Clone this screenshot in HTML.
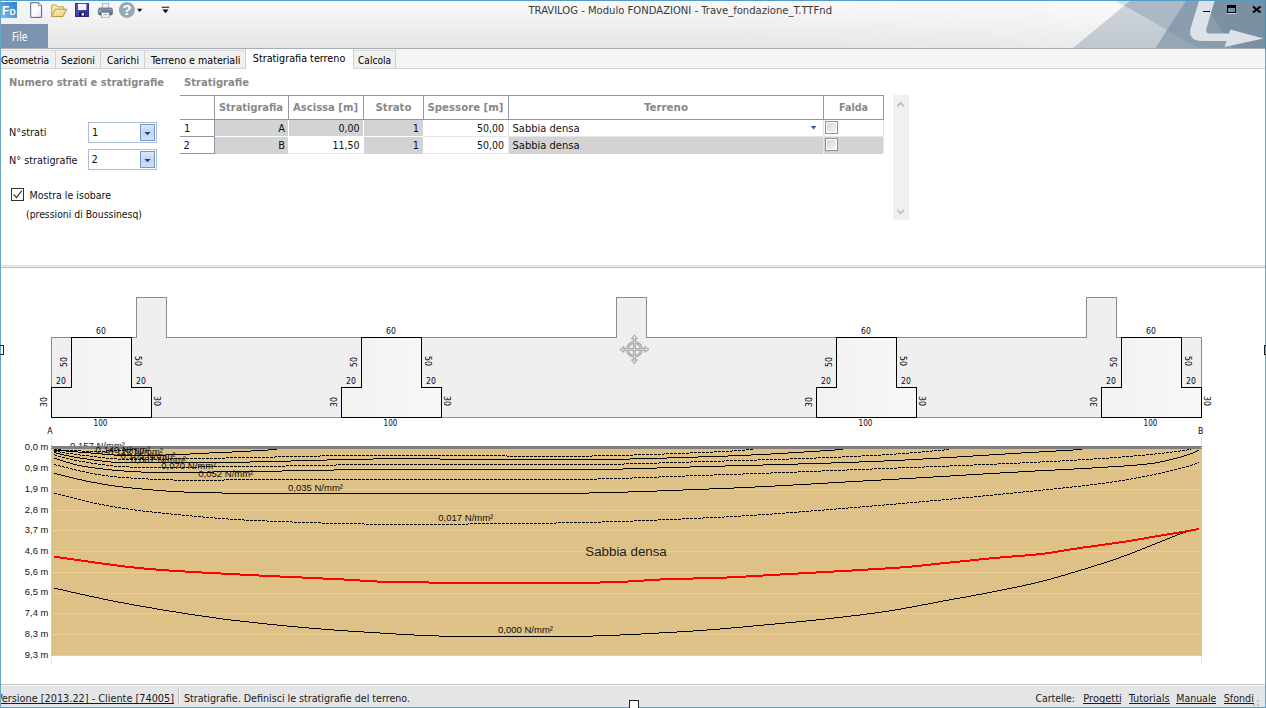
<!DOCTYPE html>
<html lang="it"><head><meta charset="utf-8"><title>TRAVILOG - Modulo FONDAZIONI</title>
<style>html,body{margin:0;padding:0;background:#fff;overflow:hidden}svg{display:block;font-family:'Liberation Sans', sans-serif}</style>
</head><body>
<svg width="1266" height="708" viewBox="0 0 1266 708">
<defs>
<linearGradient id="hdr" x1="0" y1="0" x2="0" y2="1"><stop offset="0" stop-color="#f8f8f8"/><stop offset="0.4" stop-color="#f1f1f1"/><stop offset="1" stop-color="#e4e5e7"/></linearGradient>
<linearGradient id="hdrh" x1="0" y1="0" x2="1" y2="0"><stop offset="0" stop-color="#fff" stop-opacity="0"/><stop offset="0.75" stop-color="#fff" stop-opacity="0.15"/><stop offset="1" stop-color="#fff" stop-opacity="0.3"/></linearGradient>
<linearGradient id="btn" x1="0" y1="0" x2="0" y2="1"><stop offset="0" stop-color="#dce9fb"/><stop offset="0.5" stop-color="#bfd6f5"/><stop offset="1" stop-color="#cfe0f8"/></linearGradient>
<linearGradient id="chk" x1="0" y1="0" x2="1" y2="1"><stop offset="0" stop-color="#d4d4dc"/><stop offset="1" stop-color="#f4f4f6"/></linearGradient>
<linearGradient id="tsec" x1="0" y1="0" x2="1" y2="0"><stop offset="0" stop-color="#f1f1f1"/><stop offset="1" stop-color="#f8f8f8"/></linearGradient>
<linearGradient id="triA" x1="0" y1="0" x2="0" y2="1"><stop offset="0" stop-color="#cfd5db"/><stop offset="1" stop-color="#c0c7cf"/></linearGradient>
</defs>
<g shape-rendering="crispEdges">
<rect x="0" y="0" width="1266" height="708" fill="#ffffff"/>
<rect x="1" y="1" width="1264" height="47" fill="url(#hdr)"/>
<rect x="700" y="1" width="420" height="47" fill="url(#hdrh)"/>
</g>
<g>
<polygon points="1130,1 1073,48 1265,48 1265,1" fill="url(#triA)"/>
<polygon points="1115.3,1 1131,1 1124.2,5.6" fill="#d6dde2"/>
<polygon points="1124.2,5.5 1130,1 1265,1 1265,48 1198.5,48" fill="#acb9c4"/>
<polygon points="1166.9,30 1155.7,48 1199,48 1180,36" fill="#96a6b4"/>
<polygon points="1186,1 1265,1 1265,48 1198.5,48 1166.9,30" fill="#8a9dae"/>
<polygon points="1203,1 1265,1 1265,48 1233,48" fill="#7a90a3"/>
<path d="M1199 1 L1214.5 1 L1206.3 29 Q1205.2 33.5 1210 33.5 L1229 33.5 L1230.4 29.5 L1263.4 38.4 L1224.5 46.9 L1226.6 41 L1203 41 Q1187.5 41 1190.7 28 Z" fill="#dde2e8"/>
</g>
<g shape-rendering="crispEdges">
<rect x="1" y="48" width="1264" height="1" fill="#a9aeb4"/>
<rect x="1" y="24" width="47" height="24" fill="#7b93b0"/>
<rect x="1" y="49" width="1264" height="19" fill="#f4f4f4"/>
<rect x="1" y="68" width="1264" height="1" fill="#d4d4d4"/>
<rect x="1" y="50" width="54" height="18" fill="#f0f0f0"/>
<rect x="56" y="50" width="44" height="18" fill="#f0f0f0"/>
<rect x="101" y="50" width="43" height="18" fill="#f0f0f0"/>
<rect x="145" y="50" width="100" height="18" fill="#f0f0f0"/>
<rect x="354" y="50" width="41" height="18" fill="#f0f0f0"/>
<rect x="55" y="50" width="1" height="18" fill="#d0d0d0"/>
<rect x="100" y="50" width="1" height="18" fill="#d0d0d0"/>
<rect x="144" y="50" width="1" height="18" fill="#d0d0d0"/>
<rect x="245" y="50" width="1" height="18" fill="#d0d0d0"/>
<rect x="353" y="50" width="1" height="18" fill="#d0d0d0"/>
<rect x="395" y="50" width="1" height="18" fill="#d0d0d0"/>
<rect x="1" y="50" width="245" height="1" fill="#d9d9d9"/>
<rect x="354" y="50" width="42" height="1" fill="#d9d9d9"/>
<rect x="246" y="49" width="107" height="20" fill="#ffffff"/>
<rect x="245" y="49" width="1" height="19" fill="#d0d0d0"/>
<rect x="353" y="49" width="1" height="19" fill="#d0d0d0"/>
</g>
<text x="528.5" y="14" font-size="11" fill="#3a3a3a" textLength="303.5" lengthAdjust="spacingAndGlyphs" font-family="DejaVu Sans Condensed, DejaVu Sans, Liberation Sans, sans-serif">TRAVILOG - Modulo FONDAZIONI - Trave_fondazione_T.TTFnd</text>
<text x="12" y="41" font-size="11.5" fill="#ffffff" textLength="15.5" lengthAdjust="spacingAndGlyphs" font-family="DejaVu Sans Condensed, DejaVu Sans, Liberation Sans, sans-serif">File</text>
<text x="1" y="63.5" font-size="11" fill="#000" textLength="48" lengthAdjust="spacingAndGlyphs" font-family="DejaVu Sans Condensed, DejaVu Sans, Liberation Sans, sans-serif">Geometria</text>
<text x="61" y="63.5" font-size="11" fill="#000" textLength="34" lengthAdjust="spacingAndGlyphs" font-family="DejaVu Sans Condensed, DejaVu Sans, Liberation Sans, sans-serif">Sezioni</text>
<text x="107" y="63.5" font-size="11" fill="#000" textLength="32" lengthAdjust="spacingAndGlyphs" font-family="DejaVu Sans Condensed, DejaVu Sans, Liberation Sans, sans-serif">Carichi</text>
<text x="151" y="63.5" font-size="11" fill="#000" textLength="89.5" lengthAdjust="spacingAndGlyphs" font-family="DejaVu Sans Condensed, DejaVu Sans, Liberation Sans, sans-serif">Terreno e materiali</text>
<text x="358" y="63.5" font-size="11" fill="#000" textLength="33" lengthAdjust="spacingAndGlyphs" font-family="DejaVu Sans Condensed, DejaVu Sans, Liberation Sans, sans-serif">Calcola</text>
<text x="252.8" y="62" font-size="11" fill="#000" textLength="92.5" lengthAdjust="spacingAndGlyphs" font-family="DejaVu Sans Condensed, DejaVu Sans, Liberation Sans, sans-serif">Stratigrafia terreno</text>
<defs>
<linearGradient id="appg" x1="0" y1="1" x2="1" y2="0"><stop offset="0" stop-color="#72bdf0"/><stop offset="0.5" stop-color="#4a9ee0"/><stop offset="1" stop-color="#2a82c8"/></linearGradient>
<linearGradient id="docg" x1="0" y1="0" x2="1" y2="1"><stop offset="0" stop-color="#ffffff"/><stop offset="0.6" stop-color="#fbfaff"/><stop offset="1" stop-color="#ddd8f0"/></linearGradient>
<linearGradient id="folg" x1="0" y1="0" x2="1" y2="1"><stop offset="0" stop-color="#fdf3c4"/><stop offset="1" stop-color="#f0c868"/></linearGradient>
<linearGradient id="savg" x1="0" y1="0" x2="1" y2="1"><stop offset="0" stop-color="#5a5ad0"/><stop offset="1" stop-color="#2c2c96"/></linearGradient>
<linearGradient id="prng" x1="0" y1="0" x2="0" y2="1"><stop offset="0" stop-color="#8a9ab4"/><stop offset="1" stop-color="#56677f"/></linearGradient>
</defs>
<g>
<rect x="1" y="2" width="16" height="16" fill="url(#appg)"/>
<text x="1.9" y="14.9" font-size="12" font-weight="bold" fill="#fff">F</text>
<text x="9.5" y="14.8" font-size="8.6" font-weight="bold" fill="#fff">D</text>
<path d="M30.7 2.7 H38.6 L41.6 5.7 V17.4 H30.7 Z" fill="url(#docg)" stroke="#55647c" stroke-width="1"/>
<path d="M38.6 2.7 V5.7 H41.6" fill="#e4e2f0" stroke="#7a869a" stroke-width="0.8"/>
<path d="M51.7 16.6 V5 H56.2 L57.8 6.8 H63.8 V9.3" fill="#f8eaa8" stroke="#b79a4a" stroke-width="0.9"/>
<path d="M51.7 16.6 L55.2 9.2 H66.8 L63 16.6 Z" fill="url(#folg)" stroke="#a88c3c" stroke-width="0.9"/>
<rect x="75.5" y="3.5" width="13" height="13" fill="url(#savg)" stroke="#2c2c8c" stroke-width="1"/>
<rect x="78" y="3.8" width="8.4" height="6.2" fill="#f2f2fa"/>
<rect x="79.2" y="12.2" width="5.6" height="4" fill="#1c1c40"/>
<rect x="81.6" y="13" width="2.4" height="2.6" fill="#e0e0f0"/>
<rect x="102.3" y="3.6" width="6.4" height="6" fill="#f0f0fc" stroke="#9aa2b8" stroke-width="0.7"/>
<rect x="98.4" y="8" width="14" height="7" rx="1.6" fill="url(#prng)" stroke="#50607a" stroke-width="0.7"/>
<rect x="101.4" y="12.6" width="7.8" height="4.6" fill="#fbfbfd" stroke="#8a92a6" stroke-width="0.7"/>
<rect x="103.2" y="14.2" width="4.2" height="1" fill="#9aa0b0"/>
<rect x="99.4" y="10.6" width="1.3" height="1.2" fill="#e8e49a"/>
<circle cx="126.9" cy="9.9" r="8" fill="#93abb5"/>
<text x="126.9" y="15" font-size="14.5" font-weight="bold" fill="#fff" text-anchor="middle">?</text>
<path d="M137 8.8 H142.4 L139.7 12 Z" fill="#111"/>
<path d="M161.7 6.8 H169.2 V7.8 H161.7 Z M162.4 9.5 H168.6 L165.5 13.2 Z" fill="#111"/>
<g shape-rendering="crispEdges">
<rect x="1203" y="11" width="7" height="1" fill="#000"/><rect x="1203" y="12" width="7" height="1" fill="#fff" opacity="0.35"/>
<rect x="1227" y="5" width="9" height="8" fill="#000"/><rect x="1228" y="8" width="7" height="4" fill="#7a8ea0"/><rect x="1227" y="13" width="9" height="1" fill="#fff" opacity="0.6"/>
</g>
<path d="M1253 6.5 L1260.5 12.5 M1260.5 6.5 L1253 12.5" stroke="#000" stroke-width="2.2" fill="none"/>
</g>
<text x="9" y="86" font-size="11" fill="#888888" textLength="155" lengthAdjust="spacingAndGlyphs" font-weight="bold" font-family="DejaVu Sans Condensed, DejaVu Sans, Liberation Sans, sans-serif">Numero strati e stratigrafie</text>
<text x="184" y="86" font-size="11" fill="#888888" textLength="65" lengthAdjust="spacingAndGlyphs" font-weight="bold" font-family="DejaVu Sans Condensed, DejaVu Sans, Liberation Sans, sans-serif">Stratigrafie</text>
<text x="9" y="136" font-size="11" fill="#111" textLength="37.5" lengthAdjust="spacingAndGlyphs" font-family="DejaVu Sans Condensed, DejaVu Sans, Liberation Sans, sans-serif">N°strati</text>
<text x="9" y="164" font-size="11" fill="#111" textLength="68.5" lengthAdjust="spacingAndGlyphs" font-family="DejaVu Sans Condensed, DejaVu Sans, Liberation Sans, sans-serif">N° stratigrafie</text>
<g shape-rendering="crispEdges">
<rect x="88.5" y="122.5" width="68" height="20" fill="#ffffff" stroke="#abbfdd" stroke-width="1"/>
<rect x="140.5" y="124.5" width="14" height="16" fill="url(#btn)" stroke="#7d95c4" stroke-width="1"/>
<rect x="88.5" y="149.5" width="68" height="20" fill="#ffffff" stroke="#abbfdd" stroke-width="1"/>
<rect x="140.5" y="151.5" width="14" height="16" fill="url(#btn)" stroke="#7d95c4" stroke-width="1"/>
</g>
<path d="M144.5 132 h6 l-3 3.2 z" fill="#1c3f7c"/>
<path d="M144.5 159 h6 l-3 3.2 z" fill="#1c3f7c"/>
<text x="92" y="135.5" font-size="11" fill="#111" font-family="DejaVu Sans Condensed, DejaVu Sans, Liberation Sans, sans-serif">1</text>
<text x="91.5" y="163" font-size="11" fill="#111" font-family="DejaVu Sans Condensed, DejaVu Sans, Liberation Sans, sans-serif">2</text>
<g shape-rendering="crispEdges">
<rect x="11.5" y="188.5" width="12" height="12" fill="#ffffff" stroke="#333" stroke-width="1"/>
</g>
<path d="M13.8 194.5 L16.5 197.6 L21.8 190.6" fill="none" stroke="#333" stroke-width="1.2"/>
<text x="29.5" y="198.7" font-size="11" fill="#111" textLength="81.5" lengthAdjust="spacingAndGlyphs" font-family="DejaVu Sans Condensed, DejaVu Sans, Liberation Sans, sans-serif">Mostra le isobare</text>
<text x="26" y="218" font-size="11" fill="#111" textLength="116" lengthAdjust="spacingAndGlyphs" font-family="DejaVu Sans Condensed, DejaVu Sans, Liberation Sans, sans-serif">(pressioni di Boussinesq)</text>
<g shape-rendering="crispEdges">
<rect x="215" y="120" width="73" height="16" fill="#d3d3d3"/>
<rect x="289" y="120" width="74" height="16" fill="#d3d3d3"/>
<rect x="364" y="120" width="59" height="16" fill="#d3d3d3"/>
<rect x="215" y="137" width="73" height="17" fill="#d3d3d3"/>
<rect x="364" y="137" width="59" height="17" fill="#d3d3d3"/>
<rect x="509" y="137" width="314" height="17" fill="#d3d3d3"/>
<rect x="824" y="137" width="59" height="17" fill="#d3d3d3"/>
<rect x="424" y="136" width="459" height="1" fill="#e6e6e6"/>
<rect x="289" y="153" width="74" height="1" fill="#e6e6e6"/>
<rect x="424" y="153" width="84" height="1" fill="#e6e6e6"/>
<rect x="508" y="120" width="1" height="33" fill="#e6e6e6"/>
<rect x="823" y="120" width="1" height="33" fill="#e6e6e6"/>
<rect x="883" y="120" width="1" height="33" fill="#e6e6e6"/>
<rect x="180" y="95" width="704" height="1" fill="#8e97a6"/>
<rect x="180" y="119" width="704" height="1" fill="#8e97a6"/>
<rect x="214" y="95" width="1" height="25" fill="#8e97a6"/>
<rect x="288" y="95" width="1" height="25" fill="#8e97a6"/>
<rect x="363" y="95" width="1" height="25" fill="#8e97a6"/>
<rect x="423" y="95" width="1" height="25" fill="#8e97a6"/>
<rect x="508" y="95" width="1" height="25" fill="#8e97a6"/>
<rect x="823" y="95" width="1" height="25" fill="#8e97a6"/>
<rect x="883" y="95" width="1" height="25" fill="#8e97a6"/>
<rect x="180" y="136" width="35" height="1" fill="#8e97a6"/>
<rect x="180" y="153" width="35" height="1" fill="#8e97a6"/>
<rect x="214" y="119" width="1" height="35" fill="#8e97a6"/>
<rect x="893" y="95" width="16" height="125" fill="#f0f0f0"/>
<rect x="825.5" y="121.5" width="12" height="12" fill="#ffffff" stroke="#8e8f8f" stroke-width="1"/>
<rect x="827" y="123" width="9" height="9" fill="url(#chk)"/>
<rect x="825.5" y="138.5" width="12" height="12" fill="#ffffff" stroke="#8e8f8f" stroke-width="1"/>
<rect x="827" y="140" width="9" height="9" fill="url(#chk)"/>
</g>
<path d="M897.3 106.3 L900.6 102.8 L903.9 106.3" fill="none" stroke="#bdbdbd" stroke-width="1.7"/>
<path d="M897.3 210 L900.6 213.5 L903.9 210" fill="none" stroke="#bdbdbd" stroke-width="1.7"/>
<path d="M810.8 126 h5.6 l-2.8 3.4 z" fill="#2f5fa8"/>
<text x="251" y="111" font-size="11" fill="#888888" text-anchor="middle" textLength="64" lengthAdjust="spacingAndGlyphs" font-weight="bold" font-family="DejaVu Sans Condensed, DejaVu Sans, Liberation Sans, sans-serif">Stratigrafia</text>
<text x="325.5" y="111" font-size="11" fill="#888888" text-anchor="middle" textLength="65" lengthAdjust="spacingAndGlyphs" font-weight="bold" font-family="DejaVu Sans Condensed, DejaVu Sans, Liberation Sans, sans-serif">Ascissa [m]</text>
<text x="393.5" y="111" font-size="11" fill="#888888" text-anchor="middle" textLength="36" lengthAdjust="spacingAndGlyphs" font-weight="bold" font-family="DejaVu Sans Condensed, DejaVu Sans, Liberation Sans, sans-serif">Strato</text>
<text x="465.5" y="111" font-size="11" fill="#888888" text-anchor="middle" textLength="76" lengthAdjust="spacingAndGlyphs" font-weight="bold" font-family="DejaVu Sans Condensed, DejaVu Sans, Liberation Sans, sans-serif">Spessore [m]</text>
<text x="666" y="111" font-size="11" fill="#888888" text-anchor="middle" textLength="44" lengthAdjust="spacingAndGlyphs" font-weight="bold" font-family="DejaVu Sans Condensed, DejaVu Sans, Liberation Sans, sans-serif">Terreno</text>
<text x="853.5" y="111" font-size="11" fill="#888888" text-anchor="middle" textLength="29" lengthAdjust="spacingAndGlyphs" font-weight="bold" font-family="DejaVu Sans Condensed, DejaVu Sans, Liberation Sans, sans-serif">Falda</text>
<text x="184" y="132" font-size="11" fill="#111" font-family="DejaVu Sans Condensed, DejaVu Sans, Liberation Sans, sans-serif">1</text>
<text x="183.5" y="149" font-size="11" fill="#111" font-family="DejaVu Sans Condensed, DejaVu Sans, Liberation Sans, sans-serif">2</text>
<text x="285" y="132" font-size="11" fill="#111" text-anchor="end" font-family="DejaVu Sans Condensed, DejaVu Sans, Liberation Sans, sans-serif">A</text>
<text x="285" y="149" font-size="11" fill="#111" text-anchor="end" font-family="DejaVu Sans Condensed, DejaVu Sans, Liberation Sans, sans-serif">B</text>
<text x="359.5" y="132" font-size="11" fill="#111" text-anchor="end" textLength="21" lengthAdjust="spacingAndGlyphs" font-family="DejaVu Sans Condensed, DejaVu Sans, Liberation Sans, sans-serif">0,00</text>
<text x="359.5" y="149" font-size="11" fill="#111" text-anchor="end" textLength="27" lengthAdjust="spacingAndGlyphs" font-family="DejaVu Sans Condensed, DejaVu Sans, Liberation Sans, sans-serif">11,50</text>
<text x="419" y="132" font-size="11" fill="#111" text-anchor="end" font-family="DejaVu Sans Condensed, DejaVu Sans, Liberation Sans, sans-serif">1</text>
<text x="419" y="149" font-size="11" fill="#111" text-anchor="end" font-family="DejaVu Sans Condensed, DejaVu Sans, Liberation Sans, sans-serif">1</text>
<text x="504" y="132" font-size="11" fill="#111" text-anchor="end" textLength="27" lengthAdjust="spacingAndGlyphs" font-family="DejaVu Sans Condensed, DejaVu Sans, Liberation Sans, sans-serif">50,00</text>
<text x="504" y="149" font-size="11" fill="#111" text-anchor="end" textLength="27" lengthAdjust="spacingAndGlyphs" font-family="DejaVu Sans Condensed, DejaVu Sans, Liberation Sans, sans-serif">50,00</text>
<text x="512.5" y="132" font-size="11" fill="#111" textLength="67" lengthAdjust="spacingAndGlyphs" font-family="DejaVu Sans Condensed, DejaVu Sans, Liberation Sans, sans-serif">Sabbia densa</text>
<text x="512.5" y="149" font-size="11" fill="#111" textLength="67" lengthAdjust="spacingAndGlyphs" font-family="DejaVu Sans Condensed, DejaVu Sans, Liberation Sans, sans-serif">Sabbia densa</text>
<g shape-rendering="crispEdges">
<rect x="1" y="265" width="1264" height="1" fill="#dcdcdc"/>
<rect x="1" y="266" width="1264" height="1" fill="#efefef"/>
<rect x="1" y="267" width="1264" height="1" fill="#c0c0c0"/>
</g>
<g shape-rendering="crispEdges">
<polygon points="51.5,337.5 136.5,337.5 136.5,297.5 166.5,297.5 166.5,337.5 616.5,337.5 616.5,297.5 646.5,297.5 646.5,337.5 1086.5,337.5 1086.5,297.5 1116.5,297.5 1116.5,337.5 1201.5,337.5 1201.5,417.5 51.5,417.5" fill="#efefef" stroke="#8c8c8c" stroke-width="1"/>
<polygon points="71.5,337.5 131.5,337.5 131.5,387.5 151.5,387.5 151.5,417.5 51.5,417.5 51.5,387.5 71.5,387.5" fill="url(#tsec)" stroke="#000" stroke-width="1"/>
<polygon points="361.5,337.5 421.5,337.5 421.5,387.5 441.5,387.5 441.5,417.5 341.5,417.5 341.5,387.5 361.5,387.5" fill="url(#tsec)" stroke="#000" stroke-width="1"/>
<polygon points="836.5,337.5 896.5,337.5 896.5,387.5 916.5,387.5 916.5,417.5 816.5,417.5 816.5,387.5 836.5,387.5" fill="url(#tsec)" stroke="#000" stroke-width="1"/>
<polygon points="1121.5,337.5 1181.5,337.5 1181.5,387.5 1201.5,387.5 1201.5,417.5 1101.5,417.5 1101.5,387.5 1121.5,387.5" fill="url(#tsec)" stroke="#000" stroke-width="1"/>
</g>
<text x="101" y="333.7" font-size="8.7" fill="#05050f" text-anchor="middle" textLength="9.8" lengthAdjust="spacingAndGlyphs" font-family="DejaVu Sans Condensed, DejaVu Sans, Liberation Sans, sans-serif">60</text>
<text x="100.5" y="425.6" font-size="8.7" fill="#05050f" text-anchor="middle" textLength="13.8" lengthAdjust="spacingAndGlyphs" font-family="DejaVu Sans Condensed, DejaVu Sans, Liberation Sans, sans-serif">100</text>
<text x="61" y="384" font-size="8.7" fill="#05050f" text-anchor="middle" textLength="9.8" lengthAdjust="spacingAndGlyphs" font-family="DejaVu Sans Condensed, DejaVu Sans, Liberation Sans, sans-serif">20</text>
<text x="141" y="384" font-size="8.7" fill="#05050f" text-anchor="middle" textLength="9.8" lengthAdjust="spacingAndGlyphs" font-family="DejaVu Sans Condensed, DejaVu Sans, Liberation Sans, sans-serif">20</text>
<text transform="translate(67.2,362) rotate(-90)" font-size="8.7" fill="#05050f" text-anchor="middle" textLength="9.8" lengthAdjust="spacingAndGlyphs" font-family="DejaVu Sans Condensed, DejaVu Sans, Liberation Sans, sans-serif">50</text>
<text transform="translate(134.6,361) rotate(90)" font-size="8.7" fill="#05050f" text-anchor="middle" textLength="9.8" lengthAdjust="spacingAndGlyphs" font-family="DejaVu Sans Condensed, DejaVu Sans, Liberation Sans, sans-serif">50</text>
<text transform="translate(47.2,402) rotate(-90)" font-size="8.7" fill="#05050f" text-anchor="middle" textLength="9.8" lengthAdjust="spacingAndGlyphs" font-family="DejaVu Sans Condensed, DejaVu Sans, Liberation Sans, sans-serif">30</text>
<text transform="translate(154.2,401) rotate(90)" font-size="8.7" fill="#05050f" text-anchor="middle" textLength="9.8" lengthAdjust="spacingAndGlyphs" font-family="DejaVu Sans Condensed, DejaVu Sans, Liberation Sans, sans-serif">30</text>
<text x="391" y="333.7" font-size="8.7" fill="#05050f" text-anchor="middle" textLength="9.8" lengthAdjust="spacingAndGlyphs" font-family="DejaVu Sans Condensed, DejaVu Sans, Liberation Sans, sans-serif">60</text>
<text x="390.5" y="425.6" font-size="8.7" fill="#05050f" text-anchor="middle" textLength="13.8" lengthAdjust="spacingAndGlyphs" font-family="DejaVu Sans Condensed, DejaVu Sans, Liberation Sans, sans-serif">100</text>
<text x="351" y="384" font-size="8.7" fill="#05050f" text-anchor="middle" textLength="9.8" lengthAdjust="spacingAndGlyphs" font-family="DejaVu Sans Condensed, DejaVu Sans, Liberation Sans, sans-serif">20</text>
<text x="431" y="384" font-size="8.7" fill="#05050f" text-anchor="middle" textLength="9.8" lengthAdjust="spacingAndGlyphs" font-family="DejaVu Sans Condensed, DejaVu Sans, Liberation Sans, sans-serif">20</text>
<text transform="translate(357.2,362) rotate(-90)" font-size="8.7" fill="#05050f" text-anchor="middle" textLength="9.8" lengthAdjust="spacingAndGlyphs" font-family="DejaVu Sans Condensed, DejaVu Sans, Liberation Sans, sans-serif">50</text>
<text transform="translate(424.6,361) rotate(90)" font-size="8.7" fill="#05050f" text-anchor="middle" textLength="9.8" lengthAdjust="spacingAndGlyphs" font-family="DejaVu Sans Condensed, DejaVu Sans, Liberation Sans, sans-serif">50</text>
<text transform="translate(337.2,402) rotate(-90)" font-size="8.7" fill="#05050f" text-anchor="middle" textLength="9.8" lengthAdjust="spacingAndGlyphs" font-family="DejaVu Sans Condensed, DejaVu Sans, Liberation Sans, sans-serif">30</text>
<text transform="translate(444.2,401) rotate(90)" font-size="8.7" fill="#05050f" text-anchor="middle" textLength="9.8" lengthAdjust="spacingAndGlyphs" font-family="DejaVu Sans Condensed, DejaVu Sans, Liberation Sans, sans-serif">30</text>
<text x="866" y="333.7" font-size="8.7" fill="#05050f" text-anchor="middle" textLength="9.8" lengthAdjust="spacingAndGlyphs" font-family="DejaVu Sans Condensed, DejaVu Sans, Liberation Sans, sans-serif">60</text>
<text x="865.5" y="425.6" font-size="8.7" fill="#05050f" text-anchor="middle" textLength="13.8" lengthAdjust="spacingAndGlyphs" font-family="DejaVu Sans Condensed, DejaVu Sans, Liberation Sans, sans-serif">100</text>
<text x="826" y="384" font-size="8.7" fill="#05050f" text-anchor="middle" textLength="9.8" lengthAdjust="spacingAndGlyphs" font-family="DejaVu Sans Condensed, DejaVu Sans, Liberation Sans, sans-serif">20</text>
<text x="906" y="384" font-size="8.7" fill="#05050f" text-anchor="middle" textLength="9.8" lengthAdjust="spacingAndGlyphs" font-family="DejaVu Sans Condensed, DejaVu Sans, Liberation Sans, sans-serif">20</text>
<text transform="translate(832.2,362) rotate(-90)" font-size="8.7" fill="#05050f" text-anchor="middle" textLength="9.8" lengthAdjust="spacingAndGlyphs" font-family="DejaVu Sans Condensed, DejaVu Sans, Liberation Sans, sans-serif">50</text>
<text transform="translate(899.6,361) rotate(90)" font-size="8.7" fill="#05050f" text-anchor="middle" textLength="9.8" lengthAdjust="spacingAndGlyphs" font-family="DejaVu Sans Condensed, DejaVu Sans, Liberation Sans, sans-serif">50</text>
<text transform="translate(812.2,402) rotate(-90)" font-size="8.7" fill="#05050f" text-anchor="middle" textLength="9.8" lengthAdjust="spacingAndGlyphs" font-family="DejaVu Sans Condensed, DejaVu Sans, Liberation Sans, sans-serif">30</text>
<text transform="translate(919.2,401) rotate(90)" font-size="8.7" fill="#05050f" text-anchor="middle" textLength="9.8" lengthAdjust="spacingAndGlyphs" font-family="DejaVu Sans Condensed, DejaVu Sans, Liberation Sans, sans-serif">30</text>
<text x="1151" y="333.7" font-size="8.7" fill="#05050f" text-anchor="middle" textLength="9.8" lengthAdjust="spacingAndGlyphs" font-family="DejaVu Sans Condensed, DejaVu Sans, Liberation Sans, sans-serif">60</text>
<text x="1150.5" y="425.6" font-size="8.7" fill="#05050f" text-anchor="middle" textLength="13.8" lengthAdjust="spacingAndGlyphs" font-family="DejaVu Sans Condensed, DejaVu Sans, Liberation Sans, sans-serif">100</text>
<text x="1111" y="384" font-size="8.7" fill="#05050f" text-anchor="middle" textLength="9.8" lengthAdjust="spacingAndGlyphs" font-family="DejaVu Sans Condensed, DejaVu Sans, Liberation Sans, sans-serif">20</text>
<text x="1191" y="384" font-size="8.7" fill="#05050f" text-anchor="middle" textLength="9.8" lengthAdjust="spacingAndGlyphs" font-family="DejaVu Sans Condensed, DejaVu Sans, Liberation Sans, sans-serif">20</text>
<text transform="translate(1117.2,362) rotate(-90)" font-size="8.7" fill="#05050f" text-anchor="middle" textLength="9.8" lengthAdjust="spacingAndGlyphs" font-family="DejaVu Sans Condensed, DejaVu Sans, Liberation Sans, sans-serif">50</text>
<text transform="translate(1184.6,361) rotate(90)" font-size="8.7" fill="#05050f" text-anchor="middle" textLength="9.8" lengthAdjust="spacingAndGlyphs" font-family="DejaVu Sans Condensed, DejaVu Sans, Liberation Sans, sans-serif">50</text>
<text transform="translate(1097.2,402) rotate(-90)" font-size="8.7" fill="#05050f" text-anchor="middle" textLength="9.8" lengthAdjust="spacingAndGlyphs" font-family="DejaVu Sans Condensed, DejaVu Sans, Liberation Sans, sans-serif">30</text>
<text transform="translate(1204.2,401) rotate(90)" font-size="8.7" fill="#05050f" text-anchor="middle" textLength="9.8" lengthAdjust="spacingAndGlyphs" font-family="DejaVu Sans Condensed, DejaVu Sans, Liberation Sans, sans-serif">30</text>
<text x="50" y="433.8" font-size="8.7" fill="#05050f" text-anchor="middle" font-family="DejaVu Sans Condensed, DejaVu Sans, Liberation Sans, sans-serif">A</text>
<text x="1200.8" y="433.8" font-size="8.7" fill="#05050f" text-anchor="middle" font-family="DejaVu Sans Condensed, DejaVu Sans, Liberation Sans, sans-serif">B</text>
<g transform="translate(634.4,349.4)" fill="none" stroke="#a0a0a0">
<path d="M-14.6 0 L-10.4 -3 L-10.4 3 Z M14.6 0 L10.4 -3 L10.4 3 Z M0 -14.6 L-3 -10.4 L3 -10.4 Z M0 14.6 L-3 10.4 L3 10.4 Z" fill="#dcdcdc" stroke-width="0.9"/>
<circle r="7" stroke-width="2.8"/><path d="M-11 0 H11 M0 -11 V11" stroke-width="2.8"/>
<circle r="7" stroke-width="0.8" stroke="#dedede"/><path d="M-12 0 H12 M0 -12 V12" stroke-width="0.8" stroke="#e2e2e2"/>
</g>
<g shape-rendering="crispEdges">
</g>
<text x="70" y="448.6" font-size="9.5" fill="#222" textLength="55" lengthAdjust="spacingAndGlyphs">0,157 N/mm²</text>
<g shape-rendering="crispEdges">
<rect x="51" y="449" width="1151" height="207" fill="#dec187"/>
<rect x="51" y="446" width="1151" height="3" fill="#808080"/>
<line x1="51" y1="468.5" x2="1202" y2="468.5" stroke="#dbdbdb" stroke-width="1" stroke-dasharray="1 1"/>
<line x1="51" y1="489.5" x2="1202" y2="489.5" stroke="#dbdbdb" stroke-width="1" stroke-dasharray="1 1"/>
<line x1="51" y1="510.5" x2="1202" y2="510.5" stroke="#dbdbdb" stroke-width="1" stroke-dasharray="1 1"/>
<line x1="51" y1="530.5" x2="1202" y2="530.5" stroke="#dbdbdb" stroke-width="1" stroke-dasharray="1 1"/>
<line x1="51" y1="551.5" x2="1202" y2="551.5" stroke="#dbdbdb" stroke-width="1" stroke-dasharray="1 1"/>
<line x1="51" y1="572.5" x2="1202" y2="572.5" stroke="#dbdbdb" stroke-width="1" stroke-dasharray="1 1"/>
<line x1="51" y1="593.5" x2="1202" y2="593.5" stroke="#dbdbdb" stroke-width="1" stroke-dasharray="1 1"/>
<line x1="51" y1="613.5" x2="1202" y2="613.5" stroke="#dbdbdb" stroke-width="1" stroke-dasharray="1 1"/>
<line x1="51" y1="634.5" x2="1202" y2="634.5" stroke="#dbdbdb" stroke-width="1" stroke-dasharray="1 1"/>
<line x1="51" y1="655.5" x2="1202" y2="655.5" stroke="#dbdbdb" stroke-width="1" stroke-dasharray="1 1"/>
<line x1="51.5" y1="437" x2="51.5" y2="665" stroke="#cfcfcf" stroke-width="1" stroke-dasharray="1 1"/>
<line x1="1201.5" y1="437" x2="1201.5" y2="665" stroke="#cfcfcf" stroke-width="1" stroke-dasharray="1 1"/>
</g>
<text x="95.5" y="452.5" font-size="9.5" fill="#0e0e0e" textLength="55" lengthAdjust="spacingAndGlyphs">0,140 N/mm²</text>
<text x="108" y="454.8" font-size="9.5" fill="#0e0e0e" textLength="55" lengthAdjust="spacingAndGlyphs">0,122 N/mm²</text>
<text x="120.5" y="458.8" font-size="9.5" fill="#0e0e0e" textLength="55" lengthAdjust="spacingAndGlyphs">0,105 N/mm²</text>
<text x="131" y="463" font-size="9.5" fill="#0e0e0e" textLength="55" lengthAdjust="spacingAndGlyphs">0,087 N/mm²</text>
<text x="161.3" y="468.5" font-size="9.5" fill="#0e0e0e" textLength="55" lengthAdjust="spacingAndGlyphs">0,070 N/mm²</text>
<text x="198.3" y="476.5" font-size="9.5" fill="#0e0e0e" textLength="55" lengthAdjust="spacingAndGlyphs">0,052 N/mm²</text>
<text x="288" y="490.5" font-size="9.5" fill="#0e0e0e" textLength="55" lengthAdjust="spacingAndGlyphs">0,035 N/mm²</text>
<text x="438.3" y="520.5" font-size="9.5" fill="#0e0e0e" textLength="55" lengthAdjust="spacingAndGlyphs">0,017 N/mm²</text>
<text x="498" y="632.8" font-size="9.5" fill="#0e0e0e" textLength="55" lengthAdjust="spacingAndGlyphs">0,000 N/mm²</text>
<text x="585.3" y="555.8" font-size="13.33" fill="#222" textLength="81.5" lengthAdjust="spacingAndGlyphs">Sabbia densa</text>
<g shape-rendering="crispEdges">
<path d="M54 588.5h4M58 589.5h5M63 590.5h4M67 591.5h4M71 592.5h5M76 593.5h4M80 594.5h5M85 595.5h4M89 596.5h5M94 597.5h5M99 598.5h4M103 599.5h5M108 600.5h5M113 601.5h5M118 602.5h6M124 603.5h5M129 604.5h5M134 605.5h6M140 606.5h6M146 607.5h6M152 608.5h5M157 609.5h6M163 610.5h6M169 611.5h7M176 612.5h6M182 613.5h6M188 614.5h7M195 615.5h7M202 616.5h7M209 617.5h7M216 618.5h7M223 619.5h8M231 620.5h9M240 621.5h9M249 622.5h9M258 623.5h9M267 624.5h10M277 625.5h10M287 626.5h11M298 627.5h11M309 628.5h12M321 629.5h13M334 630.5h14M348 631.5h16M364 632.5h16M380 633.5h16M396 634.5h18M414 635.5h25M439 636.5h154M593 635.5h27M620 634.5h21M641 633.5h18M659 632.5h18M677 631.5h16M693 630.5h14M707 629.5h13M720 628.5h11M731 627.5h12M743 626.5h10M753 625.5h11M764 624.5h11M775 623.5h10M785 622.5h11M796 621.5h10M806 620.5h10M816 619.5h9M825 618.5h9M834 617.5h9M843 616.5h8M851 615.5h9M860 614.5h7M867 613.5h8M875 612.5h7M882 611.5h7M889 610.5h6M895 609.5h6M901 608.5h5M906 607.5h6M912 606.5h5M917 605.5h5M922 604.5h6M928 603.5h5M933 602.5h5M938 601.5h5M943 600.5h6M949 599.5h5M954 598.5h6M960 597.5h6M966 596.5h5M971 595.5h5M976 594.5h6M982 593.5h5M987 592.5h5M992 591.5h5M997 590.5h5M1002 589.5h5M1007 588.5h5M1012 587.5h5M1017 586.5h5M1022 585.5h4M1026 584.5h5M1031 583.5h4M1035 582.5h4M1039 581.5h4M1043 580.5h4M1047 579.5h4M1051 578.5h3M1054 577.5h4M1058 576.5h3M1061 575.5h4M1065 574.5h3M1068 573.5h3M1071 572.5h4M1075 571.5h3M1078 570.5h3M1081 569.5h4M1085 568.5h3M1088 567.5h3M1091 566.5h3M1094 565.5h3M1097 564.5h4M1101 563.5h3M1104 562.5h3M1107 561.5h3M1110 560.5h3M1113 559.5h3M1116 558.5h3M1119 557.5h2M1121 556.5h3M1124 555.5h3M1127 554.5h3M1130 553.5h2M1132 552.5h3M1135 551.5h2M1137 550.5h3M1140 549.5h2M1142 548.5h3M1145 547.5h2M1147 546.5h3M1150 545.5h2M1152 544.5h3M1155 543.5h2M1157 542.5h3M1160 541.5h2M1162 540.5h3M1165 539.5h2M1167 538.5h3M1170 537.5h2M1172 536.5h3M1175 535.5h2M1177 534.5h3M1180 533.5h3M1183 532.5h3M1186 531.5h3M1189 530.5h3M1192 529.5h4M1196 528.5h3" fill="none" stroke="#000" stroke-width="1"/>
<path d="M54 493.5h3M58 494.5h3M62 495.5h3M66 496.5h3M70 497.5h3M74 498.5h3M78 499.5h3M82 500.5h3M86 501.5h3M90 502.5h3M94 503.5h3M98 503.5h1M99 504.5h2M102 504.5h2M104 505.5h1M106 505.5h3M110 506.5h3M114 506.5h1M115 507.5h2M118 507.5h3M122 508.5h3M126 508.5h2M128 509.5h1M130 509.5h3M134 509.5h1M135 510.5h2M138 510.5h3M142 510.5h1M143 511.5h2M146 511.5h3M150 511.5h2M152 512.5h1M154 512.5h3M158 512.5h3M162 513.5h3M166 513.5h3M170 513.5h1M171 514.5h2M174 514.5h3M178 514.5h3M182 515.5h3M186 515.5h3M190 515.5h2M192 516.5h1M194 516.5h3M198 516.5h3M202 516.5h1M203 517.5h2M206 517.5h3M210 517.5h3M214 517.5h1M215 518.5h2M218 518.5h3M222 518.5h3M226 518.5h2M228 519.5h1M230 519.5h3M234 519.5h3M238 519.5h3M242 519.5h2M244 520.5h1M246 520.5h3M250 520.5h3M254 520.5h3M258 520.5h3M262 520.5h3M266 520.5h1M267 521.5h2M270 521.5h3M274 521.5h3M278 521.5h3M282 521.5h3M286 521.5h3M290 521.5h2M292 522.5h1M294 522.5h3M298 522.5h3M302 522.5h3M306 522.5h3M310 522.5h3M314 522.5h3M318 522.5h3M322 523.5h3M326 523.5h3M330 523.5h3M334 523.5h3M338 523.5h3M342 523.5h3M346 523.5h3M350 523.5h3M354 523.5h3M358 523.5h3M362 523.5h2M364 524.5h1M366 524.5h3M370 524.5h3M374 524.5h3M378 524.5h3M382 524.5h3M386 524.5h3M390 524.5h3M394 524.5h3M398 524.5h3M402 524.5h3M406 524.5h3M410 524.5h3M414 524.5h3M418 524.5h3M422 524.5h3M426 524.5h3M430 524.5h3M434 524.5h3M438 524.5h3M442 524.5h3M446 524.5h3M450 524.5h3M454 524.5h3M458 524.5h3M462 524.5h3M466 524.5h2M468 523.5h1M470 523.5h3M474 523.5h3M478 523.5h3M482 523.5h3M486 523.5h3M490 523.5h3M494 523.5h3M498 523.5h3M502 523.5h3M506 523.5h3M510 523.5h3M514 523.5h3M518 523.5h3M522 523.5h3M526 523.5h3M530 523.5h3M534 523.5h3M538 523.5h3M542 523.5h3M546 523.5h3M550 523.5h3M554 523.5h2M556 522.5h1M558 522.5h3M562 522.5h3M566 522.5h3M570 522.5h3M574 522.5h3M578 522.5h3M582 522.5h3M586 522.5h3M590 522.5h3M594 522.5h3M598 522.5h3M602 521.5h3M606 521.5h3M610 521.5h3M614 521.5h3M618 521.5h3M622 521.5h3M626 521.5h3M630 521.5h3M634 520.5h3M638 520.5h3M642 520.5h3M646 520.5h3M650 520.5h3M654 520.5h3M658 519.5h3M662 519.5h3M666 519.5h3M670 519.5h3M674 519.5h3M678 519.5h3M682 518.5h3M686 518.5h3M690 518.5h3M694 518.5h3M698 518.5h3M702 518.5h1M703 517.5h2M706 517.5h3M710 517.5h3M714 517.5h3M718 517.5h3M722 517.5h2M724 516.5h1M726 516.5h3M730 516.5h3M734 516.5h3M738 516.5h3M742 515.5h3M746 515.5h3M750 515.5h3M754 515.5h3M758 514.5h3M762 514.5h3M766 514.5h3M770 514.5h2M772 513.5h1M774 513.5h3M778 513.5h3M782 513.5h3M786 512.5h3M790 512.5h3M794 512.5h3M798 512.5h1M799 511.5h2M802 511.5h3M806 511.5h3M810 511.5h1M811 510.5h2M814 510.5h3M818 510.5h3M822 510.5h2M824 509.5h1M826 509.5h3M830 509.5h3M834 509.5h2M836 508.5h1M838 508.5h3M842 508.5h3M846 508.5h2M848 507.5h1M850 507.5h3M854 507.5h3M858 507.5h2M860 506.5h1M862 506.5h3M866 506.5h3M870 506.5h2M872 505.5h1M874 505.5h3M878 505.5h3M882 505.5h2M884 504.5h1M886 504.5h3M890 504.5h3M894 504.5h2M896 503.5h1M898 503.5h3M902 503.5h3M906 503.5h1M907 502.5h2M910 502.5h3M914 502.5h3M918 502.5h1M919 501.5h2M922 501.5h3M926 501.5h3M930 500.5h3M934 500.5h3M938 500.5h3M942 499.5h3M946 499.5h3M950 499.5h2M952 498.5h1M954 498.5h3M958 498.5h3M962 497.5h3M966 497.5h3M970 497.5h3M974 496.5h3M978 496.5h3M982 496.5h1M983 495.5h2M986 495.5h3M990 495.5h3M994 494.5h3M998 494.5h3M1002 494.5h1M1003 493.5h2M1006 493.5h3M1010 493.5h3M1014 492.5h3M1018 492.5h3M1022 492.5h1M1023 491.5h2M1026 491.5h3M1030 491.5h3M1034 490.5h3M1038 490.5h3M1042 490.5h1M1043 489.5h2M1046 489.5h3M1050 489.5h3M1054 488.5h3M1058 488.5h3M1062 488.5h1M1063 487.5h2M1066 487.5h3M1070 487.5h2M1072 486.5h1M1074 486.5h3M1078 486.5h3M1082 485.5h3M1086 485.5h3M1090 484.5h3M1094 484.5h3M1098 483.5h3M1102 483.5h3M1106 482.5h3M1110 482.5h2M1112 481.5h1M1114 481.5h3M1118 481.5h1M1119 480.5h2M1122 480.5h3M1126 479.5h3M1130 479.5h1M1131 478.5h2M1134 478.5h2M1136 477.5h1M1138 477.5h3M1142 476.5h3M1146 476.5h1M1147 475.5h2M1150 475.5h2M1152 474.5h1M1154 474.5h2M1156 473.5h1M1158 473.5h3M1162 472.5h3M1166 471.5h3M1170 470.5h3M1174 469.5h3M1178 468.5h3M1182 467.5h3M1186 466.5h3M1190 465.5h2M1192 464.5h1M1194 464.5h1M1195 463.5h2M1198 462.5h1" fill="none" stroke="#000" stroke-width="1"/>
<path d="M54 473.5h3M57 474.5h4M61 475.5h4M65 476.5h4M69 477.5h4M73 478.5h4M77 479.5h5M82 480.5h4M86 481.5h5M91 482.5h6M97 483.5h5M102 484.5h6M108 485.5h7M115 486.5h8M123 487.5h9M132 488.5h10M142 489.5h11M153 490.5h13M166 491.5h18M184 492.5h38M222 493.5h367M589 492.5h39M628 491.5h29M657 490.5h26M683 489.5h26M709 488.5h25M734 487.5h21M755 486.5h20M775 485.5h18M793 484.5h18M811 483.5h17M828 482.5h17M845 481.5h18M863 480.5h18M881 479.5h18M899 478.5h17M916 477.5h17M933 476.5h17M950 475.5h16M966 474.5h17M983 473.5h17M1000 472.5h18M1018 471.5h17M1035 470.5h20M1055 469.5h19M1074 468.5h18M1092 467.5h16M1108 466.5h16M1124 465.5h13M1137 464.5h10M1147 463.5h8M1155 462.5h5M1160 461.5h5M1165 460.5h4M1169 459.5h4M1173 458.5h4M1177 457.5h4M1181 456.5h3M1184 455.5h3M1187 454.5h3M1190 453.5h3M1193 452.5h2M1195 451.5h2M1197 450.5h2" fill="none" stroke="#000" stroke-width="1"/>
<path d="M54 464.5h2M56 465.5h1M58 465.5h2M60 466.5h1M62 466.5h2M64 467.5h1M66 467.5h2M68 468.5h1M70 468.5h2M72 469.5h1M74 469.5h2M76 470.5h1M78 470.5h2M80 471.5h1M82 471.5h3M86 472.5h3M90 473.5h3M94 473.5h1M95 474.5h2M98 474.5h3M102 475.5h3M106 475.5h2M108 476.5h1M110 476.5h3M114 476.5h3M118 477.5h3M122 477.5h3M126 477.5h3M130 477.5h1M131 478.5h2M134 478.5h3M138 478.5h3M142 478.5h3M146 478.5h2M148 479.5h1M150 479.5h3M154 479.5h3M158 479.5h3M162 479.5h3M166 479.5h3M170 479.5h3M174 480.5h3M178 480.5h3M182 480.5h3M186 480.5h3M190 480.5h3M194 480.5h3M198 480.5h3M202 480.5h3M206 480.5h3M210 480.5h3M214 480.5h3M218 480.5h3M222 480.5h2M224 479.5h1M226 479.5h3M230 479.5h3M234 479.5h3M238 479.5h3M242 479.5h3M246 479.5h3M250 479.5h3M254 479.5h3M258 479.5h3M262 479.5h3M266 479.5h3M270 479.5h3M274 479.5h3M278 479.5h3M282 479.5h3M286 479.5h3M290 479.5h3M294 479.5h3M298 479.5h3M302 479.5h3M306 479.5h3M310 479.5h3M314 479.5h3M318 479.5h3M322 479.5h3M326 479.5h3M330 479.5h3M334 479.5h3M338 479.5h3M342 479.5h3M346 479.5h3M350 479.5h3M354 479.5h3M358 479.5h3M362 479.5h3M366 479.5h3M370 479.5h3M374 479.5h3M378 479.5h3M382 479.5h3M386 479.5h3M390 479.5h3M394 479.5h3M398 479.5h3M402 479.5h3M406 479.5h3M410 479.5h3M414 479.5h3M418 479.5h3M422 479.5h3M426 479.5h3M430 479.5h3M434 479.5h3M438 479.5h3M442 479.5h3M446 479.5h3M450 479.5h3M454 479.5h3M458 479.5h3M462 479.5h3M466 479.5h3M470 479.5h3M474 479.5h3M478 479.5h3M482 479.5h3M486 479.5h3M490 479.5h3M494 479.5h3M498 479.5h3M502 479.5h3M506 479.5h3M510 479.5h3M514 479.5h3M518 479.5h3M522 479.5h3M526 479.5h3M530 479.5h3M534 479.5h3M538 479.5h3M542 479.5h3M546 479.5h3M550 479.5h3M554 479.5h3M558 479.5h3M562 479.5h3M566 479.5h3M570 479.5h3M574 479.5h3M578 479.5h3M582 479.5h3M586 479.5h3M590 479.5h3M594 479.5h3M598 478.5h3M602 478.5h3M606 478.5h3M610 478.5h3M614 478.5h3M618 478.5h3M622 478.5h3M626 478.5h3M630 478.5h2M632 477.5h1M634 477.5h3M638 477.5h3M642 477.5h3M646 477.5h3M650 477.5h3M654 477.5h3M658 477.5h1M659 476.5h2M662 476.5h3M666 476.5h3M670 476.5h3M674 476.5h3M678 476.5h3M682 476.5h3M686 475.5h3M690 475.5h3M694 475.5h3M698 475.5h3M702 475.5h3M706 475.5h3M710 475.5h3M714 474.5h3M718 474.5h3M722 474.5h3M726 474.5h3M730 474.5h3M734 474.5h3M738 474.5h3M742 474.5h1M743 473.5h2M746 473.5h3M750 473.5h3M754 473.5h3M758 473.5h3M762 473.5h3M766 473.5h3M770 473.5h1M771 472.5h2M774 472.5h3M778 472.5h3M782 472.5h3M786 472.5h3M790 472.5h3M794 472.5h3M798 471.5h3M802 471.5h3M806 471.5h3M810 471.5h3M814 471.5h3M818 471.5h3M822 470.5h3M826 470.5h3M830 470.5h3M834 470.5h3M838 470.5h3M842 470.5h3M846 470.5h1M847 469.5h2M850 469.5h3M854 469.5h3M858 469.5h3M862 469.5h3M866 469.5h3M870 469.5h2M872 468.5h1M874 468.5h3M878 468.5h3M882 468.5h3M886 468.5h3M890 468.5h3M894 468.5h3M898 467.5h3M902 467.5h3M906 467.5h3M910 467.5h3M914 467.5h3M918 467.5h3M922 467.5h2M924 466.5h1M926 466.5h3M930 466.5h3M934 466.5h3M938 466.5h3M942 466.5h3M946 466.5h3M950 465.5h3M954 465.5h3M958 465.5h3M962 465.5h3M966 465.5h3M970 465.5h3M974 464.5h3M978 464.5h3M982 464.5h3M986 464.5h3M990 464.5h3M994 464.5h3M998 463.5h3M1002 463.5h3M1006 463.5h3M1010 463.5h3M1014 463.5h3M1018 463.5h2M1020 462.5h1M1022 462.5h3M1026 462.5h3M1030 462.5h3M1034 462.5h3M1038 462.5h2M1040 461.5h1M1042 461.5h3M1046 461.5h3M1050 461.5h3M1054 461.5h3M1058 461.5h2M1060 460.5h1M1062 460.5h3M1066 460.5h3M1070 460.5h3M1074 460.5h3M1078 459.5h3M1082 459.5h3M1086 459.5h3M1090 459.5h3M1094 458.5h3M1098 458.5h3M1102 458.5h3M1106 458.5h3M1110 457.5h3M1114 457.5h3M1118 457.5h3M1122 456.5h3M1126 456.5h3M1130 456.5h3M1134 455.5h3M1138 455.5h3M1142 455.5h3M1146 454.5h3M1150 454.5h3M1154 454.5h1M1155 453.5h2M1158 453.5h3M1162 453.5h2M1164 452.5h1M1166 452.5h3M1170 452.5h2M1172 451.5h1M1174 451.5h3M1178 451.5h2M1180 450.5h1M1182 450.5h3M1186 450.5h1M1187 449.5h2M1190 449.5h1" fill="none" stroke="#000" stroke-width="1"/>
<path d="M54 458.5h3M57 459.5h3M60 460.5h3M63 461.5h3M66 462.5h4M70 463.5h3M73 464.5h4M77 465.5h5M82 466.5h6M88 467.5h7M95 468.5h8M103 469.5h9M112 470.5h12M124 471.5h17M141 472.5h73M214 471.5h68M282 470.5h52M334 469.5h289M623 468.5h34M657 467.5h33M690 466.5h35M725 465.5h38M763 464.5h35M798 463.5h33M831 462.5h28M859 461.5h25M884 460.5h21M905 459.5h18M923 458.5h17M940 457.5h17M957 456.5h16M973 455.5h16M989 454.5h16M1005 453.5h16M1021 452.5h18M1039 451.5h17M1056 450.5h17M1073 449.5h9" fill="none" stroke="#000" stroke-width="1"/>
<path d="M54 454.5h1M55 455.5h2M58 456.5h3M62 457.5h3M66 458.5h3M70 459.5h3M74 460.5h3M78 460.5h1M79 461.5h2M82 461.5h3M86 462.5h3M90 462.5h1M91 463.5h2M94 463.5h3M98 464.5h3M102 464.5h3M106 465.5h3M110 465.5h3M114 466.5h3M118 466.5h3M122 466.5h3M126 466.5h3M130 467.5h3M134 467.5h3M138 467.5h3M142 467.5h3M146 467.5h3M150 467.5h3M154 467.5h3M158 467.5h3M162 467.5h3M166 467.5h3M170 467.5h3M174 467.5h3M178 467.5h3M182 467.5h3M186 467.5h3M190 467.5h3M194 467.5h3M198 467.5h1M199 466.5h2M202 466.5h3M206 466.5h3M210 466.5h3M214 466.5h3M218 466.5h3M222 466.5h3M226 466.5h3M230 466.5h3M234 466.5h3M238 466.5h3M242 466.5h3M246 466.5h3M250 466.5h3M254 466.5h3M258 466.5h3M262 466.5h3M266 466.5h3M270 466.5h3M274 466.5h3M278 466.5h3M282 466.5h3M286 465.5h3M290 465.5h3M294 465.5h3M298 465.5h3M302 465.5h3M306 465.5h3M310 465.5h3M314 465.5h3M318 465.5h3M322 465.5h3M326 465.5h3M330 465.5h3M334 465.5h2M336 464.5h1M338 464.5h3M342 464.5h3M346 464.5h3M350 464.5h3M354 464.5h3M358 464.5h3M362 464.5h3M366 464.5h3M370 464.5h3M374 464.5h3M378 464.5h3M382 464.5h3M386 464.5h3M390 464.5h3M394 464.5h3M398 464.5h3M402 464.5h3M406 464.5h3M410 464.5h3M414 464.5h3M418 464.5h3M422 464.5h3M426 464.5h3M430 464.5h3M434 464.5h3M438 464.5h3M442 464.5h3M446 464.5h3M450 464.5h3M454 464.5h3M458 464.5h3M462 464.5h3M466 464.5h3M470 464.5h3M474 464.5h3M478 464.5h3M482 464.5h3M486 464.5h3M490 464.5h3M494 464.5h3M498 464.5h3M502 464.5h3M506 464.5h3M510 464.5h3M514 464.5h3M518 464.5h3M522 464.5h3M526 464.5h3M530 464.5h3M534 464.5h3M538 464.5h3M542 464.5h3M546 464.5h3M550 464.5h3M554 464.5h3M558 464.5h3M562 464.5h3M566 464.5h3M570 464.5h3M574 464.5h3M578 464.5h3M582 464.5h3M586 464.5h3M590 464.5h3M594 464.5h3M598 464.5h3M602 464.5h3M606 464.5h3M610 464.5h3M614 464.5h3M618 464.5h3M622 464.5h2M624 463.5h1M626 463.5h3M630 463.5h3M634 463.5h3M638 463.5h3M642 463.5h3M646 463.5h3M650 463.5h3M654 463.5h3M658 463.5h1M659 462.5h2M662 462.5h3M666 462.5h3M670 462.5h3M674 462.5h3M678 462.5h3M682 462.5h3M686 462.5h3M690 462.5h1M691 461.5h2M694 461.5h3M698 461.5h3M702 461.5h3M706 461.5h3M710 461.5h3M714 461.5h3M718 461.5h3M722 461.5h2M724 460.5h1M726 460.5h3M730 460.5h3M734 460.5h3M738 460.5h3M742 460.5h3M746 460.5h3M750 460.5h3M754 460.5h3M758 459.5h3M762 459.5h3M766 459.5h3M770 459.5h3M774 459.5h3M778 459.5h3M782 459.5h3M786 459.5h3M790 458.5h3M794 458.5h3M798 458.5h3M802 458.5h3M806 458.5h3M810 458.5h3M814 458.5h2M816 457.5h1M818 457.5h3M822 457.5h3M826 457.5h3M830 457.5h3M834 457.5h3M838 457.5h3M842 456.5h3M846 456.5h3M850 456.5h3M854 456.5h3M858 456.5h3M862 455.5h3M866 455.5h3M870 455.5h3M874 455.5h3M878 455.5h3M882 454.5h3M886 454.5h3M890 454.5h3M894 454.5h2M896 453.5h1M898 453.5h3M902 453.5h3M906 453.5h3M910 452.5h3M914 452.5h3M918 452.5h3M922 451.5h3M926 451.5h3M930 451.5h2M932 450.5h1M934 450.5h3M938 450.5h3M942 450.5h2M944 449.5h1M946 449.5h3" fill="none" stroke="#000" stroke-width="1"/>
<path d="M54 452.5h2M56 453.5h4M60 454.5h4M64 455.5h5M69 456.5h5M74 457.5h6M80 458.5h7M87 459.5h7M94 460.5h8M102 461.5h9M111 462.5h139M250 461.5h41M291 460.5h36M327 459.5h46M373 458.5h67M440 459.5h190M630 458.5h37M667 457.5h31M698 456.5h30M728 455.5h23M751 454.5h20M771 453.5h17M788 452.5h16M804 451.5h16M820 450.5h15M835 449.5h8" fill="none" stroke="#000" stroke-width="1"/>
<path d="M54 451.5h3M58 451.5h2M60 452.5h1M62 452.5h3M66 453.5h3M70 453.5h3M74 454.5h3M78 454.5h2M80 455.5h1M82 455.5h3M86 455.5h3M90 456.5h3M94 456.5h3M98 457.5h3M102 457.5h3M106 458.5h3M110 458.5h3M114 458.5h3M118 459.5h3M122 459.5h3M126 459.5h3M130 459.5h3M134 459.5h3M138 459.5h3M142 459.5h3M146 459.5h3M150 459.5h3M154 459.5h3M158 459.5h3M162 459.5h3M166 459.5h3M170 459.5h1M171 458.5h2M174 458.5h3M178 458.5h3M182 458.5h3M186 458.5h3M190 458.5h3M194 458.5h3M198 458.5h3M202 458.5h3M206 458.5h3M210 458.5h3M214 458.5h3M218 458.5h3M222 458.5h3M226 457.5h3M230 457.5h3M234 457.5h3M238 457.5h3M242 457.5h3M246 457.5h3M250 457.5h3M254 457.5h3M258 457.5h3M262 457.5h3M266 457.5h3M270 457.5h3M274 457.5h1M275 456.5h2M278 456.5h3M282 456.5h3M286 456.5h3M290 456.5h3M294 456.5h3M298 456.5h3M302 456.5h3M306 456.5h3M310 456.5h3M314 456.5h3M318 456.5h2M320 455.5h1M322 455.5h3M326 455.5h3M330 455.5h3M334 455.5h3M338 455.5h3M342 455.5h3M346 455.5h3M350 455.5h3M354 455.5h3M358 455.5h3M362 455.5h3M366 455.5h3M370 455.5h3M374 455.5h3M378 455.5h3M382 455.5h3M386 455.5h3M390 455.5h3M394 455.5h3M398 455.5h3M402 455.5h3M406 455.5h3M410 455.5h3M414 455.5h3M418 455.5h3M422 455.5h3M426 455.5h3M430 455.5h3M434 455.5h3M438 455.5h3M442 455.5h3M446 455.5h3M450 455.5h3M454 455.5h3M458 455.5h3M462 455.5h3M466 455.5h3M470 455.5h3M474 455.5h3M478 455.5h3M482 455.5h3M486 455.5h3M490 455.5h3M494 455.5h3M498 455.5h3M502 455.5h3M506 455.5h1M507 456.5h2M510 456.5h3M514 456.5h3M518 456.5h3M522 456.5h3M526 456.5h3M530 456.5h3M534 456.5h3M538 456.5h3M542 456.5h3M546 456.5h3M550 456.5h3M554 456.5h3M558 456.5h3M562 456.5h3M566 456.5h3M570 456.5h3M574 456.5h3M578 456.5h3M582 456.5h3M586 456.5h3M590 456.5h2M592 455.5h1M594 455.5h3M598 455.5h3M602 455.5h3M606 455.5h3M610 455.5h3M614 455.5h3M618 455.5h3M622 455.5h3M626 455.5h3M630 455.5h3M634 454.5h3M638 454.5h3M642 454.5h3M646 454.5h3M650 454.5h3M654 454.5h3M658 454.5h3M662 454.5h2M664 453.5h1M666 453.5h3M670 453.5h3M674 453.5h3M678 453.5h3M682 453.5h3M686 453.5h3M690 452.5h3M694 452.5h3M698 452.5h3M702 452.5h3M706 452.5h3M710 452.5h3M714 451.5h3M718 451.5h3M722 451.5h3M726 451.5h3M730 451.5h2M732 450.5h1M734 450.5h3M738 450.5h3M742 450.5h3M746 449.5h3M750 449.5h3" fill="none" stroke="#000" stroke-width="1"/>
<path d="M54 450.5h12M66 451.5h12M78 452.5h13M91 453.5h11M102 454.5h12M114 455.5h52M166 454.5h24M190 453.5h19M209 452.5h23M232 451.5h19M251 450.5h17M268 449.5h9" fill="none" stroke="#000" stroke-width="1"/>
<path d="M54 449.5h3M58 449.5h3M62 450.5h3M66 450.5h3M70 450.5h3M74 450.5h3M78 450.5h3M82 451.5h3M86 451.5h3M90 451.5h3M94 451.5h3M98 451.5h3M102 451.5h3M106 451.5h1M107 450.5h2M110 450.5h3M114 450.5h3M118 450.5h3M122 450.5h3M126 449.5h3M130 449.5h3M134 449.5h2" fill="none" stroke="#000" stroke-width="1"/>
<path d="M54 556.5h6M60 557.5h7M67 558.5h7M74 559.5h7M81 560.5h7M88 561.5h7M95 562.5h7M102 563.5h8M110 564.5h7M117 565.5h8M125 566.5h9M134 567.5h10M144 568.5h12M156 569.5h13M169 570.5h16M185 571.5h17M202 572.5h19M221 573.5h19M240 574.5h19M259 575.5h21M280 576.5h22M302 577.5h21M323 578.5h21M344 579.5h16M360 580.5h17M377 581.5h52M429 582.5h171M600 581.5h28M628 580.5h16M644 579.5h16M660 578.5h33M693 577.5h34M727 576.5h19M746 575.5h17M763 574.5h17M780 573.5h18M798 572.5h18M816 571.5h18M834 570.5h18M852 569.5h16M868 568.5h17M885 567.5h15M900 566.5h12M912 565.5h10M922 564.5h9M931 563.5h9M940 562.5h10M950 561.5h10M960 560.5h10M970 559.5h9M979 558.5h10M989 557.5h11M1000 556.5h12M1012 555.5h13M1025 554.5h11M1036 553.5h9M1045 552.5h7M1052 551.5h6M1058 550.5h6M1064 549.5h6M1070 548.5h7M1077 547.5h6M1083 546.5h8M1091 545.5h7M1098 544.5h7M1105 543.5h7M1112 542.5h7M1119 541.5h7M1126 540.5h6M1132 539.5h6M1138 538.5h6M1144 537.5h5M1149 536.5h6M1155 535.5h6M1161 534.5h6M1167 533.5h6M1173 532.5h6M1179 531.5h6M1185 530.5h6M1191 529.5h5M1196 528.5h3M54 557.5h6M60 558.5h7M67 559.5h7M74 560.5h7M81 561.5h7M88 562.5h7M95 563.5h7M102 564.5h8M110 565.5h7M117 566.5h8M125 567.5h9M134 568.5h10M144 569.5h12M156 570.5h13M169 571.5h16M185 572.5h17M202 573.5h19M221 574.5h19M240 575.5h19M259 576.5h21M280 577.5h22M302 578.5h21M323 579.5h21M344 580.5h16M360 581.5h17M377 582.5h52M429 583.5h171M600 582.5h28M628 581.5h16M644 580.5h16M660 579.5h33M693 578.5h34M727 577.5h19M746 576.5h17M763 575.5h17M780 574.5h18M798 573.5h18M816 572.5h18M834 571.5h18M852 570.5h16M868 569.5h17M885 568.5h15M900 567.5h12M912 566.5h10M922 565.5h9M931 564.5h9M940 563.5h10M950 562.5h10M960 561.5h10M970 560.5h9M979 559.5h10M989 558.5h11M1000 557.5h12M1012 556.5h13M1025 555.5h11M1036 554.5h9M1045 553.5h7M1052 552.5h6M1058 551.5h6M1064 550.5h6M1070 549.5h7M1077 548.5h6M1083 547.5h8M1091 546.5h7M1098 545.5h7M1105 544.5h7M1112 543.5h7M1119 542.5h7M1126 541.5h6M1132 540.5h6M1138 539.5h6M1144 538.5h5M1149 537.5h6M1155 536.5h6M1161 535.5h6M1167 534.5h6M1173 533.5h6M1179 532.5h6M1185 531.5h6M1191 530.5h5M1196 529.5h3" fill="none" stroke="#ff0000" stroke-width="1"/>
</g>
<text x="48.3" y="450.3" font-size="9.6" fill="#111" text-anchor="end" textLength="23.5" lengthAdjust="spacingAndGlyphs">0,0 m</text>
<text x="48.3" y="471.04" font-size="9.6" fill="#111" text-anchor="end" textLength="23.5" lengthAdjust="spacingAndGlyphs">0,9 m</text>
<text x="48.3" y="491.78000000000003" font-size="9.6" fill="#111" text-anchor="end" textLength="23.5" lengthAdjust="spacingAndGlyphs">1,9 m</text>
<text x="48.3" y="512.52" font-size="9.6" fill="#111" text-anchor="end" textLength="23.5" lengthAdjust="spacingAndGlyphs">2,8 m</text>
<text x="48.3" y="533.26" font-size="9.6" fill="#111" text-anchor="end" textLength="23.5" lengthAdjust="spacingAndGlyphs">3,7 m</text>
<text x="48.3" y="554.0" font-size="9.6" fill="#111" text-anchor="end" textLength="23.5" lengthAdjust="spacingAndGlyphs">4,6 m</text>
<text x="48.3" y="574.74" font-size="9.6" fill="#111" text-anchor="end" textLength="23.5" lengthAdjust="spacingAndGlyphs">5,6 m</text>
<text x="48.3" y="595.48" font-size="9.6" fill="#111" text-anchor="end" textLength="23.5" lengthAdjust="spacingAndGlyphs">6,5 m</text>
<text x="48.3" y="616.22" font-size="9.6" fill="#111" text-anchor="end" textLength="23.5" lengthAdjust="spacingAndGlyphs">7,4 m</text>
<text x="48.3" y="636.96" font-size="9.6" fill="#111" text-anchor="end" textLength="23.5" lengthAdjust="spacingAndGlyphs">8,3 m</text>
<text x="48.3" y="657.7" font-size="9.6" fill="#111" text-anchor="end" textLength="23.5" lengthAdjust="spacingAndGlyphs">9,3 m</text>
<g shape-rendering="crispEdges">
<rect x="1" y="684" width="1264" height="23" fill="#e4e5e6"/>
<rect x="1" y="684" width="1264" height="1" fill="#c2c2c2"/>
<rect x="1" y="685" width="1264" height="1" fill="#f8f8f8"/>
<rect x="178" y="689" width="1" height="15" fill="#b8b8b8"/>
<rect x="179" y="689" width="1" height="15" fill="#fafafa"/>
</g>
<text x="-4" y="702.3" font-size="11" fill="#1a1a1a" textLength="178" lengthAdjust="spacingAndGlyphs" font-family="DejaVu Sans Condensed, DejaVu Sans, Liberation Sans, sans-serif">Versione [2013.22] - Cliente [74005]</text>
<rect x="1" y="703" width="173" height="1" fill="#1a1a1a" shape-rendering="crispEdges"/>
<text x="184" y="702.3" font-size="11" fill="#1a1a1a" textLength="226" lengthAdjust="spacingAndGlyphs" font-family="DejaVu Sans Condensed, DejaVu Sans, Liberation Sans, sans-serif">Stratigrafie. Definisci le stratigrafie del terreno.</text>
<text x="1035.5" y="702.3" font-size="11" fill="#1a1a1a" textLength="39.5" lengthAdjust="spacingAndGlyphs" font-family="DejaVu Sans Condensed, DejaVu Sans, Liberation Sans, sans-serif">Cartelle:</text>
<text x="1083.3" y="702.3" font-size="11" fill="#1a1a1a" textLength="38.5" lengthAdjust="spacingAndGlyphs" font-family="DejaVu Sans Condensed, DejaVu Sans, Liberation Sans, sans-serif">Progetti</text>
<rect x="1083" y="703" width="38" height="1" fill="#1a1a1a" shape-rendering="crispEdges"/>
<text x="1128.8" y="702.3" font-size="11" fill="#1a1a1a" textLength="40.7" lengthAdjust="spacingAndGlyphs" font-family="DejaVu Sans Condensed, DejaVu Sans, Liberation Sans, sans-serif">Tutorials</text>
<rect x="1129" y="703" width="41" height="1" fill="#1a1a1a" shape-rendering="crispEdges"/>
<text x="1176.3" y="702.3" font-size="11" fill="#1a1a1a" textLength="40" lengthAdjust="spacingAndGlyphs" font-family="DejaVu Sans Condensed, DejaVu Sans, Liberation Sans, sans-serif">Manuale</text>
<rect x="1176" y="703" width="40" height="1" fill="#1a1a1a" shape-rendering="crispEdges"/>
<text x="1223.8" y="702.3" font-size="11" fill="#1a1a1a" textLength="30" lengthAdjust="spacingAndGlyphs" font-family="DejaVu Sans Condensed, DejaVu Sans, Liberation Sans, sans-serif">Sfondi</text>
<rect x="1224" y="703" width="30" height="1" fill="#1a1a1a" shape-rendering="crispEdges"/>
<g shape-rendering="crispEdges">
<rect x="0" y="0" width="1266" height="1" fill="#559cc4"/>
<rect x="0" y="0" width="1" height="708" fill="#69a5c7"/>
<rect x="1265" y="0" width="1" height="708" fill="#68a8cc"/>
<rect x="0" y="707" width="1266" height="1" fill="#5f9ec2"/>
<rect x="1265" y="0" width="1" height="49" fill="#4a86ac"/>
<rect x="0" y="345" width="4" height="1" fill="#222"/>
<rect x="0" y="354" width="4" height="1" fill="#222"/>
<rect x="3" y="345" width="1" height="10" fill="#222"/>
<rect x="1264" y="345" width="2" height="1" fill="#222"/>
<rect x="1264" y="354" width="2" height="1" fill="#222"/>
<rect x="1264" y="345" width="1" height="10" fill="#222"/>
<rect x="629.5" y="700.5" width="9" height="9" fill="#fff" stroke="#222" stroke-width="1"/>
</g>
<path d="M1253 705 h1.5 M1257 705 h1.5 M1257 701 h1.5" stroke="#999" stroke-width="1.5"/>
</svg></body></html>
